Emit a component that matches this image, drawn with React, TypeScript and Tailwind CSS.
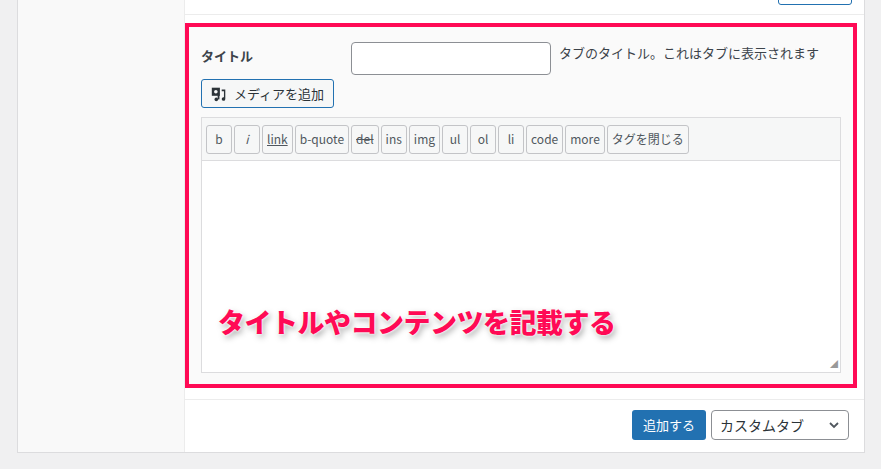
export default function App() {
  const btns = ["b", "i", "link", "b-quote", "del", "ins", "img", "ul", "ol", "li", "code", "more", "タグを閉じる"];
  const font = { fontFamily: '"Noto Sans CJK JP", "Noto Sans", sans-serif' };
  return (
    <div className="w-[881px] h-[469px] bg-[#f0f0f1] overflow-hidden text-[#3c434a]" style={font}>
      <div className="ml-[17px] w-[848px] h-[453px] flex border border-t-0 border-[#dcdcde] bg-white">
        <div className="w-[168px] bg-[#f9f9f9] border-r border-[#ececec]" />
        <div className="flex-1 flex flex-col">
          <div className="h-[15px] border-b border-[#ececec] relative">
            <div className="absolute right-[12px] top-[-4px] w-[74px] h-[9px] border border-[#2271b1] rounded-[3px]" />
          </div>
          <div className="mt-[8px] mr-[7px] h-[365px] border-[4px] border-[#ff0a55] bg-[#fafafa] px-[12px] pt-[15px] relative">
            <div className="flex items-start">
              <div className="w-[150px] text-[13px] font-bold pt-[4px]">タイトル</div>
              <div className="w-[200px] h-[33px] border border-[#8c8f94] rounded-[4px] bg-white" />
              <div className="ml-[8px] text-[13px] pt-[1px]">タブのタイトル。これはタブに表示されます</div>
            </div>
            <div className="mt-[4px] w-[133px] h-[29px] border border-[#2271b1] rounded-[3px] bg-[#f6f7f7] flex items-center px-[8px] gap-[6px] text-[13px] text-[#2c3338]">
              <svg width="18" height="18" viewBox="0 0 20 20" fill="#2c3338">
                <path d="M2 3h9v9H2z" />
                <circle cx="6.5" cy="7.5" r="2" fill="#f6f7f7" />
                <path d="M13 5h4v10.5a2 2 0 1 1-1.5-1.9V7H13z" />
                <circle cx="7" cy="16" r="2" />
                <path d="M8.5 16V11h2v5z" />
              </svg>
              <span>メディアを追加</span>
            </div>
            <div className="mt-[9px] w-[640px] border border-[#dcdcde] bg-white">
              <div className="h-[43px] bg-[#f6f7f7] border-b border-[#dcdcde] flex items-center gap-[2px] px-[4px]">
                {btns.map((b) => (
                  <div key={b} className={"h-[29px] min-w-[26px] px-[4px] flex items-center justify-center border border-[#c3c4c7] rounded-[3px] bg-[#f6f7f7] text-[12px] text-[#50575e] " + (b === "link" ? "underline" : "") + (b === "del" ? " line-through" : "") + (b === "i" ? " italic" : "")}>{b}</div>
                ))}
              </div>
              <div className="h-[211px] relative">
                <div className="absolute right-[2px] bottom-[2px] text-[8px] text-[#999]">◢</div>
              </div>
            </div>
            <div className="absolute left-[29px] top-[275px] text-[27px] font-black text-[#ff0a55] tracking-[-0.5px]" style={{ textShadow: "0 0 2px #fff, 0 0 3px #fff, 2px 3px 6px rgba(0,0,0,0.35)", WebkitTextStroke: "0px" }}>
              タイトルやコンテンツを記載する
            </div>
          </div>
          <div className="mt-[11px] border-t border-[#ececec] flex justify-end items-start pt-[10px] pr-[15px] gap-[5px]">
            <div className="w-[74px] h-[30px] bg-[#2271b1] rounded-[3px] text-white text-[13px] flex items-center justify-center">追加する</div>
            <div className="w-[138px] h-[30px] border border-[#8c8f94] rounded-[4px] bg-white flex items-center justify-between px-[8px] text-[14px] text-[#2c3338]">
              <span>カスタムタブ</span>
              <svg width="12" height="12" viewBox="0 0 12 12"><path d="M2 4l4 4 4-4" stroke="#50575e" strokeWidth="1.8" fill="none" /></svg>
            </div>
          </div>
        </div>
      </div>
    </div>
  );
}
